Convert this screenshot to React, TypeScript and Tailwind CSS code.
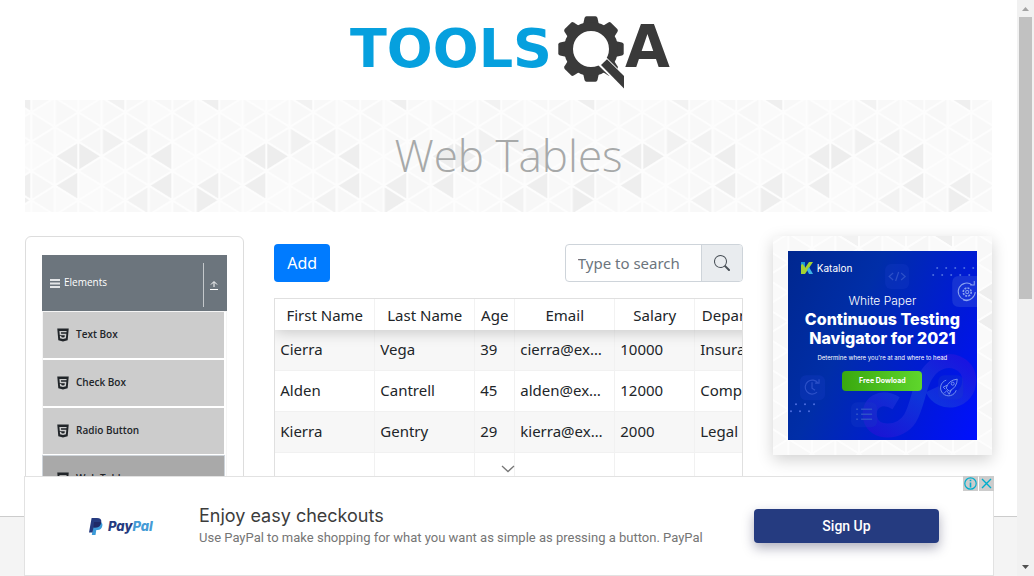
import React from "react";
import { AiFillHtml5 } from "react-icons/ai";
import { BsSearch } from "react-icons/bs";

const SHADES: Record<string, string> = {
  "1,4": "#eeeeee", "2,4": "#ededed", "3,3": "#f1f1f1", "4,3": "#f2f2f2",
  "5,4": "#eeeeee", "5,6": "#eeeeee", "1,6": "#eeeeee", "7,6": "#efefef",
  "7,7": "#eeeeee", "4,7": "#f2f2f2", "3,0": "#f2f2f2", "7,0": "#efefef",
};
const LIGHT = ["#f8f8f8", "#f9f9f9", "#f8f8f8", "#fafafa", "#f7f7f7", "#fafafa", "#f8f8f8"];
const COL = 23.5;
const HALF = 14.67;

/* Repeating mesh of triangles used behind the banner and the side promo. */
function TriangleMesh({ id, offset }: { id: string; offset: number }) {
  const shapes: React.ReactNode[] = [];
  for (let k = 0; k < 8; k++) {
    for (let i = 0; i <= 16; i++) {
      const tipLeft = (k + i) % 2 === 1;
      const tipX = (tipLeft ? k : k + 1) * COL;
      const sideX = (tipLeft ? k + 1 : k) * COL;
      const y = -2.3 + HALF * i;
      shapes.push(
        <polygon
          key={`${k},${i}`}
          points={`${tipX},${y} ${sideX},${y - HALF} ${sideX},${y + HALF}`}
          fill={SHADES[`${k},${i}`] ?? LIGHT[(k * 5 + i * 3 + k * i) % 7]}
          stroke="#fdfdfd"
          strokeWidth="2"
          strokeLinejoin="round"
        />,
      );
    }
  }
  return (
    <svg className="absolute inset-0 h-full w-full" aria-hidden="true">
      <defs>
        <pattern id={id} x={offset} y="0" width="188" height="232" patternUnits="userSpaceOnUse">
          {shapes}
        </pattern>
      </defs>
      <rect width="100%" height="100%" fill={`url(#${id})`} />
    </svg>
  );
}

function Logo() {
  return (
    <svg viewBox="0 0 340 90" className="h-[90px] w-[340px]" role="img" aria-label="TOOLSQA">
      <text x="11" y="62" fontSize="54" fontWeight="700" fill="#06a0de" fontFamily="DejaVu Sans">TOOLS</text>
      <g transform="translate(252 44)" fill="#3a3a3a">
        {[0, 45, 90, 135, 180, 225, 270, 315].map((a) => (
          <path key={a} transform={`rotate(${a})`} d="M-8-24 L-6.500-31 Q-6-32.700-4.500-32.700 H4.500 Q6-32.700 6.500-31 L8-24Z" />
        ))}
        <circle r="22.500" fill="none" stroke="#3a3a3a" strokeWidth="9" />
        <path d="M7 16 L15 8 L40 33 V48Z" fill="#fff" />
        <path d="M10 16 L16 10.300 L33 27 V39.500Z" />
      </g>
      <text x="286" y="62" fontSize="58" fontWeight="700" fill="#3a3a3a" fontFamily="DejaVu Sans">A</text>
    </svg>
  );
}

function Sidebar() {
  return (
    <nav className="rounded-md border border-[#ddd] px-4 pt-[18px]" style={{ fontFamily: '"Open Sans", sans-serif' }}>
      <button className="flex h-14 w-full items-center bg-[#6c757d] pl-2 text-[10px] text-white">
        <svg viewBox="0 0 10 9" className="h-[9px] w-[10px]" fill="#e3e5e7">
          <path d="M0 0h10v2H0zM0 3.500h10v2H0zM0 7h10v2H0z" />
        </svg>
        <span className="ml-1 pb-[2px]">Elements</span>
        <span className="mt-1 ml-auto flex h-11 items-center border-l border-[#c4c8cb] pr-[9px] pl-[6px]">
          <svg viewBox="0 0 8 10" className="h-[10px] w-2" fill="none" stroke="#fff">
            <path d="M0 9.500h8M4 7V2M1 4.500l3-3 3 3" />
          </svg>
        </span>
      </button>
      <ul className="border-x border-t border-[#f5f5f5] pr-[2px]">
        {["Text Box", "Check Box", "Radio Button", "Web Tables", "Buttons"].map((t) => (
          <li
            key={t}
            className={
              t === "Web Tables"
                ? "mb-[2px] flex h-[46px] items-center bg-[#a9a9a9] pl-3 outline outline-[#ced4da]"
                : "mb-[2px] flex h-[46px] items-center bg-[#ccc] pl-3"
            }
          >
            <AiFillHtml5 size={16} />
            <a href="#" className="ml-[5px] pb-px text-[10px] font-semibold">{t}</a>
          </li>
        ))}
      </ul>
    </nav>
  );
}

const HEADS = ["First Name", "Last Name", "Age", "Email", "Salary", "Department"];
const ROWS = [
  ["Cierra", "Vega", "39", "cierra@example.com", "10000", "Insurance"],
  ["Alden", "Cantrell", "45", "alden@example.com", "12000", "Compliance"],
  ["Kierra", "Gentry", "29", "kierra@example.com", "2000", "Legal"],
  ["", "", "", "", "", ""],
  ["", "", "", "", "", ""],
];

function Records() {
  return (
    <section className="col-span-2 pt-2">
      <div className="flex items-center justify-between">
        <button className="h-[38px] rounded bg-[#007bff] px-[13px] text-base text-white">Add</button>
        <div className="flex h-[38px] w-[178px] rounded border border-[#ced4da]">
          <input
            aria-label="Type to search"
            placeholder="Type to search"
            className="w-0 flex-1 pl-3 text-[15px] outline-none placeholder:text-[#6c757d]"
          />
          <button aria-label="Search" className="flex w-[41px] items-center justify-center rounded-r-[3px] border-l border-[#ced4da] bg-[#e9ecef] text-[#495057]">
            <BsSearch size={16} />
          </button>
        </div>
      </div>
      <div className="mt-4 overflow-hidden border border-[#e0e0e0]">
        <table className="w-[600px] table-fixed border-separate border-spacing-0 text-[15px]">
          <colgroup>
            <col className="w-[100px]" />
            <col className="w-[100px]" />
            <col className="w-[40px]" />
            <col className="w-[100px]" />
            <col className="w-[80px]" />
            <col className="w-[100px]" />
            <col />
          </colgroup>
          <thead className="relative z-10 bg-white shadow-[0_2px_15px_rgba(0,0,0,0.2)]">
            <tr className="h-[31px]">
              {HEADS.map((h) => (
                <th key={h} className="border-r border-[#f2f2f2] p-0 pt-px font-normal whitespace-nowrap">{h}</th>
              ))}
              <th aria-label="Action" />
            </tr>
          </thead>
          <tbody>
            {ROWS.map((r, n) => (
              <tr key={n} className={n < 3 && n % 2 === 0 ? "h-[41px] bg-[#f7f7f7]" : "h-[41px]"}>
                {r.map((c, m) => (
                  <td key={m} className="truncate border-r border-b border-[#f1f1f1] px-[5px] py-0 pb-[2px]">{c}</td>
                ))}
                <td />
              </tr>
            ))}
          </tbody>
        </table>
      </div>
    </section>
  );
}

function Promo() {
  return (
    <aside className="relative self-start p-[15px] shadow-[0_5px_15px_rgba(0,0,0,0.18)]">
      <TriangleMesh id="mesh-promo" offset={-8} />
      <a
        href="#"
        className="relative flex aspect-square flex-col items-center overflow-hidden bg-[linear-gradient(115deg,#00278f_0%,#002ea8_35%,#0018dc_75%,#0010ff_100%)] text-white"
        style={{ fontFamily: "Inter, sans-serif" }}
      >
        <svg viewBox="0 0 189 189" className="absolute inset-0 h-full w-full" fill="none" aria-hidden="true">
          <defs>
            <linearGradient id="loop" x1="0" y1="1" x2="1" y2="0">
              <stop offset="0" stopColor="#2a10d8" />
              <stop offset="0.5" stopColor="#1747dc" />
              <stop offset="1" stopColor="#2b12dc" />
            </linearGradient>
          </defs>
          <path
            d="M108 152C93 143 79 151 82 167C86 184 112 183 122 167C132 149 130 128 146 115C161 104 181 112 181 129C181 151 153 157 144 138"
            stroke="url(#loop)"
            strokeWidth="14"
            opacity=".6"
          />
          <g fill="#1a3cc8" opacity=".3">
            <rect x="97" y="13" width="24" height="25" rx="6" />
            <path d="M189 25h-18q-7 0-7 7v17q0 7 7 7h18z" fill="#4a68dd" />
            <rect x="12" y="124" width="25" height="25" rx="6" />
            <rect x="63" y="151" width="26" height="25" rx="6" />
            <rect x="150" y="124" width="25" height="24" rx="6" />
          </g>
          <g stroke="#2c50c8" strokeWidth="1.2">
            <path d="M105 22l-4 3.500 4 3.500M113 22l4 3.500-4 3.500M110.500 21l-3 9" />
            <path d="M30 132a7 7 0 1 0-1 9M24 131v6l3 2M27 132h4v-4" />
            <path d="M68 158h2M73 158h11M68 163h2M73 163h11M68 168h2M73 168h11" strokeWidth="1.600" />
          </g>
          <g stroke="#8aa2f0" strokeWidth="1">
            <path d="M184 34a8.500 8.500 0 1 0 3 7M182 34h4v-4M175 49q6 2 9-2" />
            <circle cx="179" cy="41" r="1.600" />
            <circle cx="179" cy="41" r="4" strokeDasharray="2 1.100" strokeWidth="1.600" />
          </g>
          <g stroke="#7d98f2" strokeWidth=".9">
            <path d="M158 129a8 8 0 1 0 10 10M158 137q2-8 11-9q0 8-8 12zM159 134l-4 2 2 2M163 139l-2 4-2-3M156 142l3-3" />
            <circle cx="164.500" cy="132.500" r="1.500" />
          </g>
          <g fill="#4d6fe0">
            {[0, 1, 2, 3, 4].map((n) => <circle key={n} cx={149 + n * 9} cy="17" r="1" />)}
            {[0, 1, 2, 3, 4].map((n) => <circle key={n} cx={145 + n * 9} cy="24" r="1" />)}
            {[0, 1, 2].map((n) => <circle key={n} cx={8 + n * 9} cy="153" r="1" />)}
            {[0, 1, 2].map((n) => <circle key={n} cx={3 + n * 9} cy="160" r="1" />)}
          </g>
        </svg>
        <span className="relative mt-[9px] ml-[13px] flex items-center gap-1 self-start text-[10px] leading-4">
          <svg viewBox="0 0 12 12" className="h-3 w-3">
            <path d="M0 0h4v12H0z" fill="#1a9ad6" />
            <path d="M0 3l4-3v6L8 0h4L4 12H0z" fill="#a4d233" />
            <path d="M0 0h4v5z" fill="#1a9ad6" />
            <path d="M6 8l2-3 4 7H8z" fill="#3db5e6" />
          </svg>
          Katalon
        </span>
        <span className="relative mt-[17px] text-xs leading-4 font-light">White Paper</span>
        <span className="relative mt-[1px] text-center text-base leading-[19px] font-extrabold whitespace-nowrap">
          Continuous Testing<br />Navigator for 2021
        </span>
        <span className="relative mt-1 text-[6px] leading-3 whitespace-nowrap">Determine where you're at and where to head</span>
        <span className="relative mt-[7px] flex h-5 w-20 items-center justify-center rounded bg-linear-to-r from-[#39a80e] to-[#5fd62c] text-[7px] font-bold">
          Free Dowload
        </span>
      </a>
    </aside>
  );
}

function BottomAd() {
  return (
    <aside
      className="absolute right-[23px] bottom-0 left-6 z-20 flex h-[100px] items-center border border-[#e2e2e2] bg-white pr-[54px] pl-16"
      style={{ fontFamily: "Inter, sans-serif" }}
    >
      <button aria-label="Collapse" className="absolute -top-3 left-1/2 -ml-[9px] flex h-3 w-4 items-start justify-center">
        <svg viewBox="0 0 14 8" className="h-2 w-[14px]" fill="none" stroke="#777" strokeWidth="1.3">
          <path d="M1 1l6 5.500L13 1" />
        </svg>
      </button>
      <div className="flex w-[110px] items-center gap-[5px]">
        <svg viewBox="0 0 14 17" className="h-[17px] w-[14px]">
          <path d="M5 4h6.500Q14 5 13.300 8Q12.500 12 8.500 12H7.300L6.500 17H2.800z" fill="#3b9bd9" />
          <path d="M2.600 0H8q4.800 0 4.300 4Q11.500 9.500 6 9.500H4.500L3.500 14.500H0z" fill="#253b80" />
          <path d="M5 4h7.300Q11.500 9.500 6 9.500H4.500z" fill="#1f2a68" />
        </svg>
        <span className="pt-[2px] text-[13px] font-extrabold text-[#253b80] italic">
          Pay<span className="text-[#459bd6]">Pal</span>
        </span>
      </div>
      <div className="min-w-0 flex-1">
        <p className="text-lg leading-6 text-[#3c3c3c]">Enjoy easy checkouts</p>
        <p className="text-[13px] leading-5 whitespace-nowrap text-[#757575]" style={{ fontFamily: "Roboto, sans-serif" }}>
          Use PayPal to make shopping for what you want as simple as pressing a button. PayPal
        </p>
      </div>
      <button
        className="h-[34px] w-[185px] rounded bg-[#253b80] text-sm font-medium text-white shadow-[0_5px_12px_rgba(30,30,70,0.35)]"
        style={{ fontFamily: "Roboto, sans-serif" }}
      >
        Sign Up
      </button>
      <div className="absolute -top-px -right-px flex gap-px">
        <button aria-label="Ad information" className="h-[15px] w-[15px] bg-[#ccc]">
          <svg viewBox="0 0 15 15" fill="none" stroke="#00aecd" strokeWidth="1.2">
            <circle cx="7.500" cy="7.500" r="5.700" />
            <path d="M7.500 6.500v5M7.500 3.800v1.500" strokeWidth="1.600" />
          </svg>
        </button>
        <button aria-label="Close ad" className="h-[15px] w-[15px] bg-[#ccc]">
          <svg viewBox="0 0 15 15" fill="none" stroke="#00aecd" strokeWidth="1.400">
            <path d="M3 3l9 9M12 3l-9 9" />
          </svg>
        </button>
      </div>
    </aside>
  );
}

function ScrollRail() {
  return (
    <div className="flex w-[17px] flex-col items-center bg-[#f1f1f1]" aria-hidden="true">
      <svg viewBox="0 0 17 17" className="h-[17px] w-[17px]"><path d="M5 11h7L8.500 7z" fill="#a3a3a3" /></svg>
      <div className="h-[49%] w-[13px] bg-[#c1c1c1]" />
      <svg viewBox="0 0 17 17" className="mt-auto h-[17px] w-[17px]"><path d="M5 6h7L8.500 10z" fill="#505050" /></svg>
    </div>
  );
}

export default function App() {
  return (
    <div
      className="flex h-screen overflow-hidden bg-white text-[#212529]"
      style={{ fontFamily: '"Noto Sans", "Open Sans", sans-serif' }}
    >
      <div className="relative flex min-w-0 flex-1 flex-col">
        <main className="min-h-0 flex-1 overflow-hidden px-[25px]">
          <header className="flex justify-center py-[5px]">
            <a href="#"><Logo /></a>
          </header>
          <div className="relative flex h-28 items-center justify-center">
            <TriangleMesh id="mesh-banner" offset={6.3} />
            <h1 className="relative pb-[2px] text-[44px] font-light text-[#a7a9a9]" style={{ fontFamily: '"Open Sans", sans-serif' }}>
              Web Tables
            </h1>
          </div>
          <div className="mt-6 grid grid-cols-4 gap-[30px]">
            <Sidebar />
            <Records />
            <Promo />
          </div>
        </main>
        <footer className="h-[60px] border-t border-[#ccc] bg-[#f4f4f4]" />
        <BottomAd />
      </div>
      <ScrollRail />
    </div>
  );
}
